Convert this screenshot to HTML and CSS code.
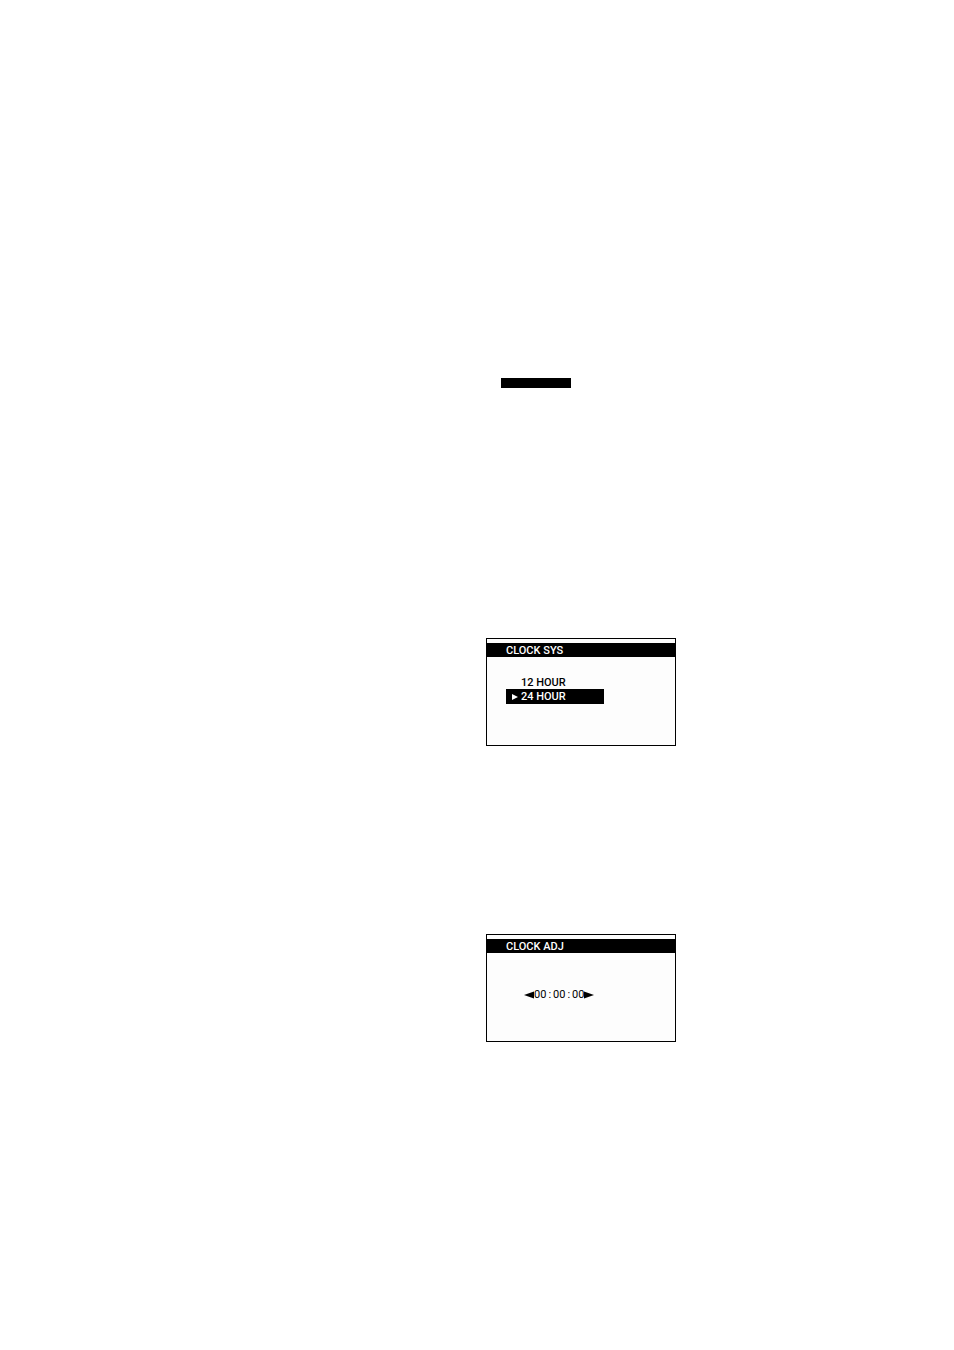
FILE: index.html
```html
<!DOCTYPE html>
<html lang="en">
<head>
    <meta charset="UTF-8">
    <meta name="viewport" content="width=device-width, initial-scale=1.0">
    <title>Clock Settings</title>
    <link rel="stylesheet" href="styles.css">
</head>
<body>
    <main class="page">
        <div class="marker"></div>

        <!-- 12 / 24 hour selection -->
        <section class="screen">
            <h2 class="screen-title">CLOCK SYS</h2>
            <div class="options">
                <button type="button" class="option">12 HOUR</button>
                <button type="button" class="option selected">
                    <svg class="cursor" viewBox="0 0 6 6" aria-hidden="true"><path d="M0 0L6 3L0 6Z"/></svg>24 HOUR
                </button>
            </div>
        </section>

        <!-- Time adjustment -->
        <section class="screen">
            <h2 class="screen-title">CLOCK ADJ</h2>
            <div class="adjust">
                <button type="button" class="arrow" aria-label="Previous">
                    <svg viewBox="0 0 10 8"><path d="M10 0.5V7.5L0 4Z"/></svg>
                </button>
                <div class="time">00<span class="colon">:</span>00<span class="colon">:</span>00</div>
                <button type="button" class="arrow" aria-label="Next">
                    <svg viewBox="0 0 10 8"><path d="M0 0.5V7.5L10 4Z"/></svg>
                </button>
            </div>
        </section>
    </main>
</body>
</html>
```

FILE: styles.css
```css
body {
    margin: 0;
    background-color: #fff;
    color: #000;
    font-family: Roboto, "Liberation Sans", sans-serif;
    font-size: 11px;
    font-weight: 500;
    line-height: 14px;
}

.page {
    display: flex;
    flex-direction: column;
    align-items: flex-start;
    margin-left: calc(50% + 9px);
    padding: 378px 0 306px;
}

.marker {
    width: 70px;
    height: 10px;
    margin: 0 0 250px 15px;
    background-color: #000;
}

/* Display panels */
.screen {
    box-sizing: border-box;
    width: 100%;
    max-width: 190px;
    min-height: 108px;
    padding-top: 4px;
    border: 1px solid #000;
    background-color: #fdfdfd;
}

.screen + .screen {
    margin-top: 188px;
}

.screen-title {
    margin: 0;
    padding: 2px 0 0 19px;
    background-color: #000;
    color: #fff;
    font-size: 11px;
    font-weight: 500;
    line-height: 12px;
}

button {
    border: none;
    padding: 0;
    background: none;
    color: inherit;
    font: inherit;
    cursor: pointer;
}

/* Option list */
.options {
    display: flex;
    flex-direction: column;
    width: 98px;
    margin: 20px 0 0 19px;
}

.option {
    display: flex;
    align-items: center;
    padding-left: 15px;
    line-height: 12px;
}

.option.selected {
    padding: 2px 0 1px 6px;
    background-color: #000;
    color: #fff;
}

.cursor {
    width: 6px;
    height: 6px;
    margin-right: 3px;
    fill: #fff;
}

/* Time row */
.adjust {
    display: flex;
    align-items: center;
    margin: 35px 0 0 37px;
}

.arrow {
    display: flex;
}

.arrow svg {
    width: 10px;
    height: 8px;
    fill: #000;
}

.time {
    font-weight: 400;
}

.colon {
    padding: 0 2px;
}
```
